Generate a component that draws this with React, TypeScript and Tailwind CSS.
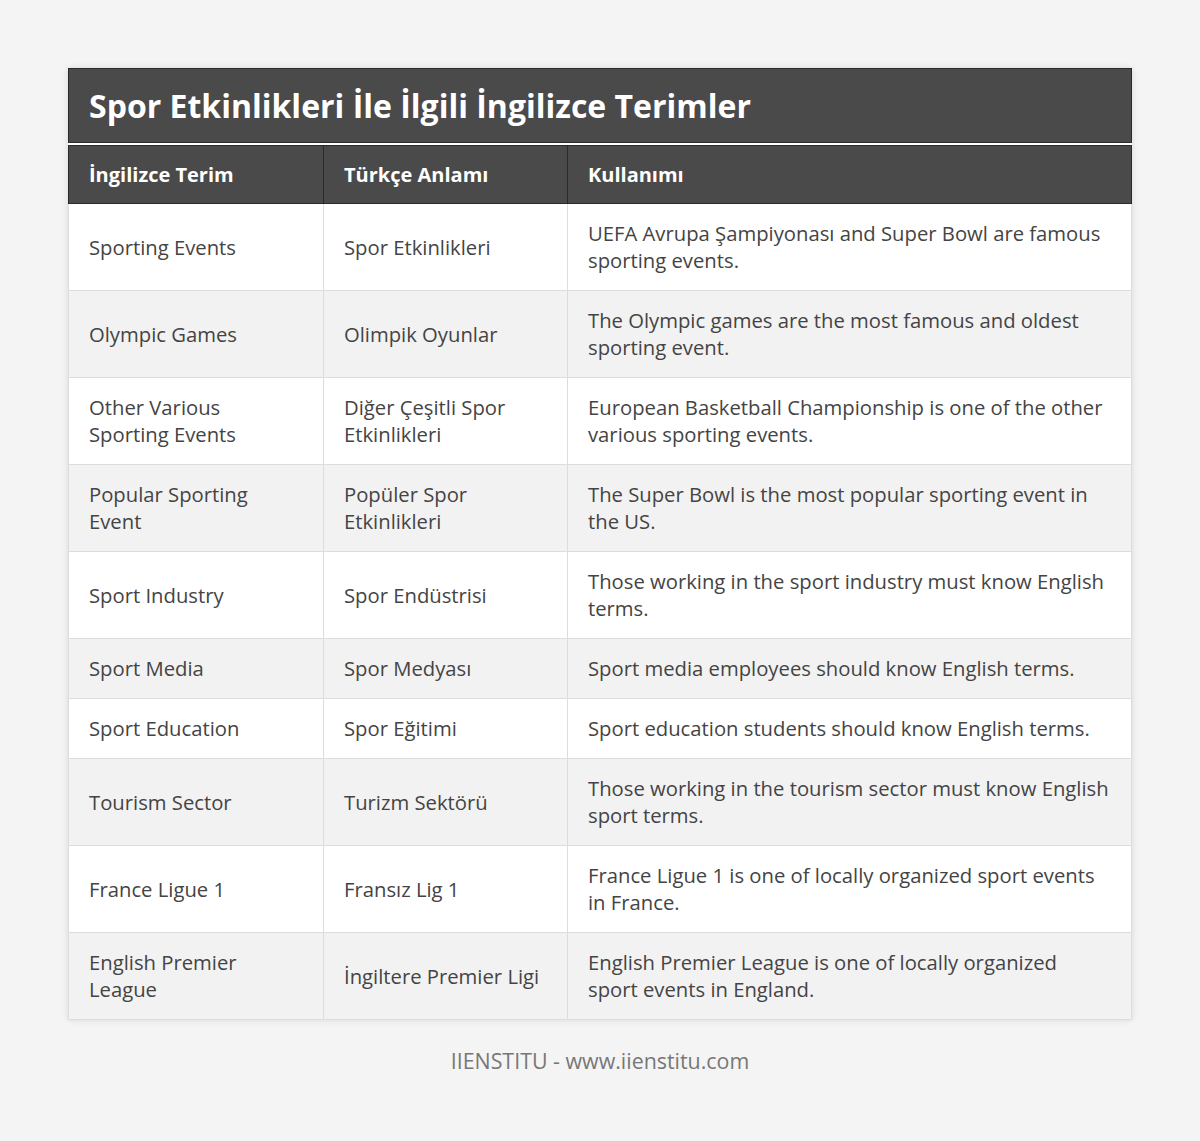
const rows: [string, string, string][] = [
  ["Sporting Events", "Spor Etkinlikleri", "UEFA Avrupa Şampiyonası and Super Bowl are famous sporting events."],
  ["Olympic Games", "Olimpik Oyunlar", "The Olympic games are the most famous and oldest sporting event."],
  ["Other Various Sporting Events", "Diğer Çeşitli Spor Etkinlikleri", "European Basketball Championship is one of the other various sporting events."],
  ["Popular Sporting Event", "Popüler Spor Etkinlikleri", "The Super Bowl is the most popular sporting event in the US."],
  ["Sport Industry", "Spor Endüstrisi", "Those working in the sport industry must know English terms."],
  ["Sport Media", "Spor Medyası", "Sport media employees should know English terms."],
  ["Sport Education", "Spor Eğitimi", "Sport education students should know English terms."],
  ["Tourism Sector", "Turizm Sektörü", "Those working in the tourism sector must know English sport terms."],
  ["France Ligue 1", "Fransız Lig 1", "France Ligue 1 is one of locally organized sport events in France."],
  ["English Premier League", "İngiltere Premier Ligi", "English Premier League is one of locally organized sport events in England."],
];

export default function App() {
  return (
    <div className="min-h-[1141px] bg-[#f4f4f4] pt-[68px] font-['Open_Sans',sans-serif]">
      <div className="mx-auto w-[1064px] bg-white shadow-[0_0_6px_rgba(0,0,0,0.12)]">
        <div className="border border-[#2a2a2a] bg-[#4a4a4a] px-5 h-[75px] flex items-center">
          <h1 className="text-[32px] font-bold text-white leading-none">Spor Etkinlikleri İle İlgili İngilizce Terimler</h1>
        </div>
        <table className="w-full border-collapse mt-[2px] text-left">
          <colgroup>
            <col className="w-[255px]" />
            <col className="w-[244px]" />
            <col />
          </colgroup>
          <thead>
            <tr className="bg-[#4a4a4a] h-[58px]">
              {["İngilizce Terim", "Türkçe Anlamı", "Kullanımı"].map((h) => (
                <th key={h} className="border border-[#2a2a2a] px-5 text-[20px] font-bold text-white">
                  {h}
                </th>
              ))}
            </tr>
          </thead>
          <tbody>
            {rows.map((r, i) => (
              <tr key={i} className={i % 2 === 0 ? "bg-white" : "bg-[#f2f2f2]"}>
                {r.map((c, j) => (
                  <td key={j} className="border border-[#dddddd] pl-5 pr-[22px] py-4 text-[20.25px] leading-[27px] text-[#444444] align-middle">
                    {c}
                  </td>
                ))}
              </tr>
            ))}
          </tbody>
        </table>
      </div>
      <p className="mt-[25px] text-center text-[21.4px] text-[#777777]">IIENSTITU - www.iienstitu.com</p>
    </div>
  );
}
